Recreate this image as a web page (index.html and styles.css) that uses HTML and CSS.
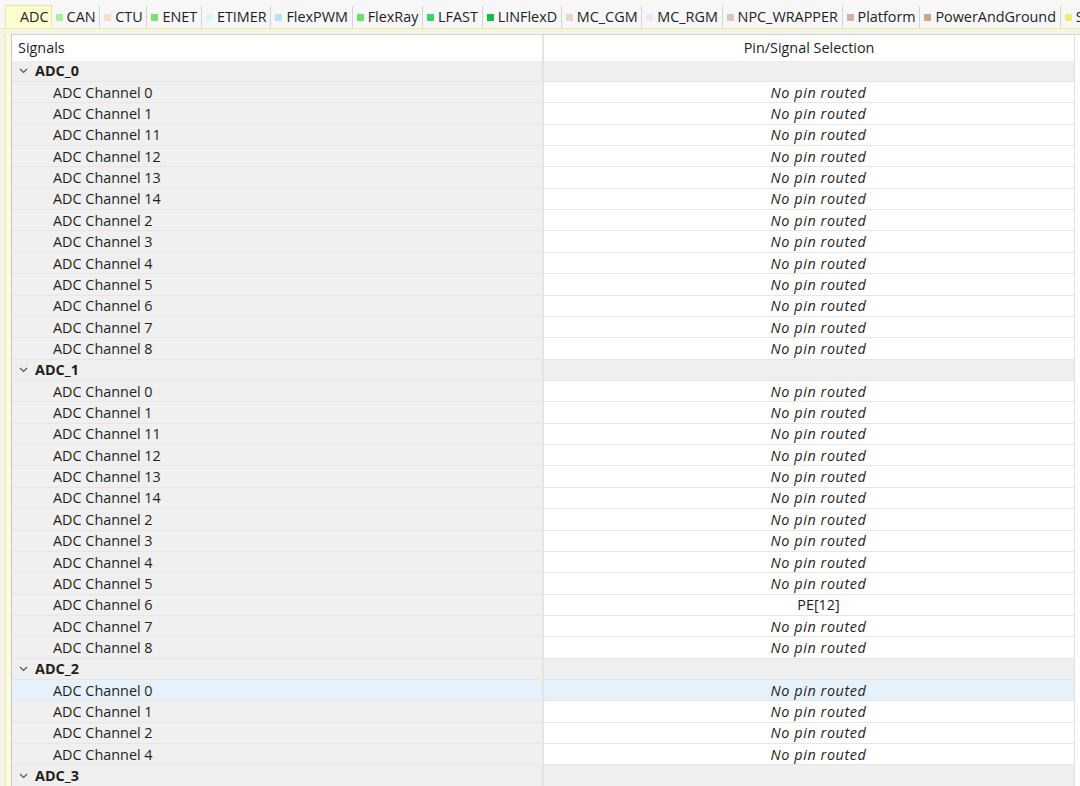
FILE: index.html
```html
<!DOCTYPE html>
<html>
<head>
<meta charset="utf-8">
<link rel="stylesheet" href="styles.css">
</head>
<body>
<div class="app">
  <div class="tabbar">
    <div class="tab active"><span class="label">ADC</span></div>
    <div class="tab"><span class="sq c-can"></span><span class="label">CAN</span></div>
    <div class="tab"><span class="sq c-ctu"></span><span class="label">CTU</span></div>
    <div class="tab"><span class="sq c-enet"></span><span class="label">ENET</span></div>
    <div class="tab"><span class="sq c-etimer"></span><span class="label">ETIMER</span></div>
    <div class="tab"><span class="sq c-flexpwm"></span><span class="label">FlexPWM</span></div>
    <div class="tab"><span class="sq c-flexray"></span><span class="label">FlexRay</span></div>
    <div class="tab"><span class="sq c-lfast"></span><span class="label">LFAST</span></div>
    <div class="tab"><span class="sq c-linflexd"></span><span class="label">LINFlexD</span></div>
    <div class="tab"><span class="sq c-mccgm"></span><span class="label">MC_CGM</span></div>
    <div class="tab"><span class="sq c-mcrgm"></span><span class="label">MC_RGM</span></div>
    <div class="tab"><span class="sq c-npc"></span><span class="label">NPC_WRAPPER</span></div>
    <div class="tab"><span class="sq c-platform"></span><span class="label">Platform</span></div>
    <div class="tab"><span class="sq c-power"></span><span class="label">PowerAndGround</span></div>
    <div class="tab last"><span class="sq c-s"></span><span class="label">S</span></div>
  </div>
  <div class="pane">
    <div class="strip"></div>
    <div class="table">
      <div class="row header">
        <div class="cell left">Signals</div>
        <div class="cell right">Pin/Signal Selection</div>
        <div class="cell extra"></div>
      </div>

      <div class="row group">
        <div class="cell left"><svg class="chev" width="9" height="6" viewBox="0 0 9 6"><polyline points="1,1 4.5,4.5 8,1" fill="none" stroke="#555" stroke-width="1.2"/></svg><b>ADC_0</b></div>
        <div class="cell right"></div>
        <div class="cell extra"></div>
      </div>
      <div class="row"><div class="cell left child">ADC Channel 0</div><div class="cell right none">No pin routed</div><div class="cell extra"></div></div>
      <div class="row"><div class="cell left child">ADC Channel 1</div><div class="cell right none">No pin routed</div><div class="cell extra"></div></div>
      <div class="row"><div class="cell left child">ADC Channel 11</div><div class="cell right none">No pin routed</div><div class="cell extra"></div></div>
      <div class="row"><div class="cell left child">ADC Channel 12</div><div class="cell right none">No pin routed</div><div class="cell extra"></div></div>
      <div class="row"><div class="cell left child">ADC Channel 13</div><div class="cell right none">No pin routed</div><div class="cell extra"></div></div>
      <div class="row"><div class="cell left child">ADC Channel 14</div><div class="cell right none">No pin routed</div><div class="cell extra"></div></div>
      <div class="row"><div class="cell left child">ADC Channel 2</div><div class="cell right none">No pin routed</div><div class="cell extra"></div></div>
      <div class="row"><div class="cell left child">ADC Channel 3</div><div class="cell right none">No pin routed</div><div class="cell extra"></div></div>
      <div class="row"><div class="cell left child">ADC Channel 4</div><div class="cell right none">No pin routed</div><div class="cell extra"></div></div>
      <div class="row"><div class="cell left child">ADC Channel 5</div><div class="cell right none">No pin routed</div><div class="cell extra"></div></div>
      <div class="row"><div class="cell left child">ADC Channel 6</div><div class="cell right none">No pin routed</div><div class="cell extra"></div></div>
      <div class="row"><div class="cell left child">ADC Channel 7</div><div class="cell right none">No pin routed</div><div class="cell extra"></div></div>
      <div class="row"><div class="cell left child">ADC Channel 8</div><div class="cell right none">No pin routed</div><div class="cell extra"></div></div>

      <div class="row group">
        <div class="cell left"><svg class="chev" width="9" height="6" viewBox="0 0 9 6"><polyline points="1,1 4.5,4.5 8,1" fill="none" stroke="#555" stroke-width="1.2"/></svg><b>ADC_1</b></div>
        <div class="cell right"></div>
        <div class="cell extra"></div>
      </div>
      <div class="row"><div class="cell left child">ADC Channel 0</div><div class="cell right none">No pin routed</div><div class="cell extra"></div></div>
      <div class="row"><div class="cell left child">ADC Channel 1</div><div class="cell right none">No pin routed</div><div class="cell extra"></div></div>
      <div class="row"><div class="cell left child">ADC Channel 11</div><div class="cell right none">No pin routed</div><div class="cell extra"></div></div>
      <div class="row"><div class="cell left child">ADC Channel 12</div><div class="cell right none">No pin routed</div><div class="cell extra"></div></div>
      <div class="row"><div class="cell left child">ADC Channel 13</div><div class="cell right none">No pin routed</div><div class="cell extra"></div></div>
      <div class="row"><div class="cell left child">ADC Channel 14</div><div class="cell right none">No pin routed</div><div class="cell extra"></div></div>
      <div class="row"><div class="cell left child">ADC Channel 2</div><div class="cell right none">No pin routed</div><div class="cell extra"></div></div>
      <div class="row"><div class="cell left child">ADC Channel 3</div><div class="cell right none">No pin routed</div><div class="cell extra"></div></div>
      <div class="row"><div class="cell left child">ADC Channel 4</div><div class="cell right none">No pin routed</div><div class="cell extra"></div></div>
      <div class="row"><div class="cell left child">ADC Channel 5</div><div class="cell right none">No pin routed</div><div class="cell extra"></div></div>
      <div class="row"><div class="cell left child">ADC Channel 6</div><div class="cell right pin">PE[12]</div><div class="cell extra"></div></div>
      <div class="row"><div class="cell left child">ADC Channel 7</div><div class="cell right none">No pin routed</div><div class="cell extra"></div></div>
      <div class="row"><div class="cell left child">ADC Channel 8</div><div class="cell right none">No pin routed</div><div class="cell extra"></div></div>

      <div class="row group">
        <div class="cell left"><svg class="chev" width="9" height="6" viewBox="0 0 9 6"><polyline points="1,1 4.5,4.5 8,1" fill="none" stroke="#555" stroke-width="1.2"/></svg><b>ADC_2</b></div>
        <div class="cell right"></div>
        <div class="cell extra"></div>
      </div>
      <div class="row selected"><div class="cell left child">ADC Channel 0</div><div class="cell right none">No pin routed</div><div class="cell extra"></div></div>
      <div class="row"><div class="cell left child">ADC Channel 1</div><div class="cell right none">No pin routed</div><div class="cell extra"></div></div>
      <div class="row"><div class="cell left child">ADC Channel 2</div><div class="cell right none">No pin routed</div><div class="cell extra"></div></div>
      <div class="row"><div class="cell left child">ADC Channel 4</div><div class="cell right none">No pin routed</div><div class="cell extra"></div></div>

      <div class="row group">
        <div class="cell left"><svg class="chev" width="9" height="6" viewBox="0 0 9 6"><polyline points="1,1 4.5,4.5 8,1" fill="none" stroke="#555" stroke-width="1.2"/></svg><b>ADC_3</b></div>
        <div class="cell right"></div>
        <div class="cell extra"></div>
      </div>
    </div>
  </div>
</div>
</body>
</html>
```

FILE: styles.css
```css
html, body {
  margin: 0;
  padding: 0;
}
body {
  font-family: "Open Sans", "Noto Sans", "Liberation Sans", sans-serif;
  font-size: 14.4px;
  color: #1e1e1e;
  background: #ffffff;
}
.app {
  width: 1080px;
  height: 786px;
  overflow: hidden;
  display: flex;
  flex-direction: column;
}
.tabbar {
  height: 29px;
  box-sizing: border-box;
  padding-top: 6px;
  padding-left: 5px;
  background: #f7f7f7;
  border-bottom: 1px solid #ecec9c;
  display: flex;
  align-items: stretch;
  white-space: nowrap;
  overflow: hidden;
}
.tab {
  display: flex;
  align-items: center;
  padding: 0 3.7px 0 4px;
  border-right: 1px solid #d4d4d4;
  line-height: 1;
  flex: none;
}
.tab.last {
  border-right: none;
}
.tab.active {
  background: #fdfdd0;
  border: 1px solid #e6e6a8;
  border-bottom: none;
  margin-top: -1px;
  padding: 1px 2px 0 14px;
}
.sq {
  width: 7px;
  height: 7px;
  margin-right: 4px;
  flex: none;
}
.c-can { background: #a8f0a0; }
.c-ctu { background: #fcdcc8; }
.c-enet { background: #7ce06c; }
.c-etimer { background: #d8f8f8; }
.c-flexpwm { background: #b4e4f8; }
.c-flexray { background: #6ce06c; }
.c-lfast { background: #38d868; }
.c-linflexd { background: #10c040; }
.c-mccgm { background: #ecd8c2; }
.c-mcrgm { background: #f8e0f8; }
.c-npc { background: #dcc8b8; }
.c-platform { background: #ccb4a4; }
.c-power { background: #c8a888; }
.c-s { background: #f0f070; }

.pane {
  flex: 1;
  display: flex;
  background: #f4f4ea;
  padding-top: 5px;
  min-height: 0;
}
.strip {
  width: 5px;
  margin-left: 5px;
  border-left: 1px solid #ecec9c;
  background: #fbfbe2;
  flex: none;
}
.table {
  flex: 1;
  border-top: 1px solid #d2d2d2;
  border-left: 1px solid #c8c8c8;
  background: #ffffff;
  overflow: hidden;
}
.row {
  display: grid;
  grid-template-columns: 532px 531px 1fr;
  height: 21.36px;
  box-sizing: border-box;
}
.row .cell {
  display: flex;
  align-items: center;
  border-bottom: 1px solid #e6e6e6;
  box-sizing: border-box;
  white-space: nowrap;
}
.cell.left {
  background: #f0f0f0;
  border-right: 2px solid #e4e4e4;
}
.cell.right {
  background: #ffffff;
  border-right: 1px solid #e0e0e0;
  justify-content: center;
  padding-left: 19px;
}
.cell.extra {
  background: #ffffff;
  border-bottom: none;
}
.row.header {
  height: 25.6px;
}
.row.header .cell {
  background: #ffffff;
  border-bottom: none;
}
.row.header .cell.left {
  padding-left: 6px;
}
.row.header .cell.right {
  padding-left: 0;
}
.row.group .cell.left,
.row.group .cell.right {
  background: #efefef;
}
.row.group .cell.left {
  padding-left: 7px;
}
.chev {
  margin-right: 7px;
}
.cell.child {
  padding-left: 41px;
}
.none {
  font-style: italic;
  letter-spacing: 0.6px;
}
.row.selected .cell.left,
.row.selected .cell.right {
  background: #e5f1fb;
}
```
